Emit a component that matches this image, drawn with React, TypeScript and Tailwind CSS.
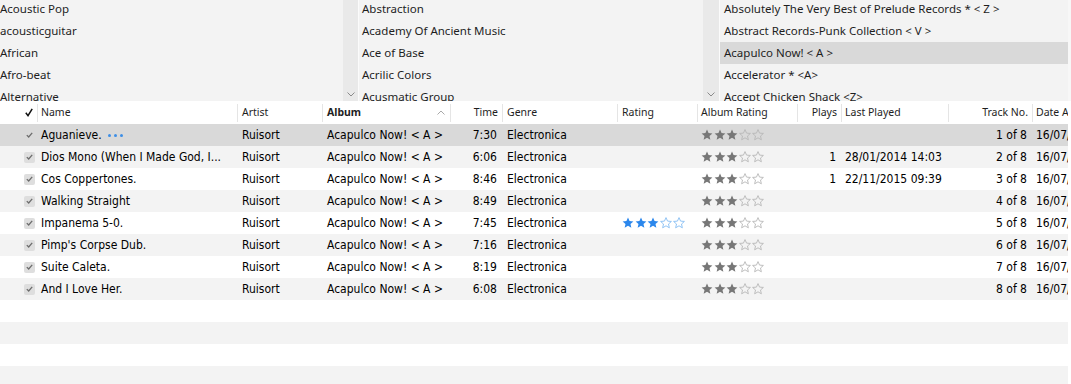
import React from "react";

const genres = ["Acoustic Pop", "acousticguitar", "African", "Afro-beat", "Alternative"];
const artists = ["Abstraction", "Academy Of Ancient Music", "Ace of Base", "Acrilic Colors", "Acusmatic Group"];
const albums = [
  "Absolutely The Very Best of Prelude Records * < Z >",
  "Abstract Records-Punk Collection < V >",
  "Acapulco Now! < A >",
  "Accelerator * <A>",
  "Accept Chicken Shack  <Z>",
];

type Track = {
  name: string;
  time: string;
  plays: string;
  last: string;
  track: string;
  rating: number;
};

const tracks: Track[] = [
  { name: "Aguanieve.", time: "7:30", plays: "", last: "", track: "1 of 8", rating: 0 },
  { name: "Dios Mono (When I Made God, I...", time: "6:06", plays: "1", last: "28/01/2014 14:03", track: "2 of 8", rating: 0 },
  { name: "Cos Coppertones.", time: "8:46", plays: "1", last: "22/11/2015 09:39", track: "3 of 8", rating: 0 },
  { name: "Walking Straight", time: "8:49", plays: "", last: "", track: "4 of 8", rating: 0 },
  { name: "Impanema 5-0.", time: "7:45", plays: "", last: "", track: "5 of 8", rating: 3 },
  { name: "Pimp's Corpse Dub.", time: "7:16", plays: "", last: "", track: "6 of 8", rating: 0 },
  { name: "Suite Caleta.", time: "8:19", plays: "", last: "", track: "7 of 8", rating: 0 },
  { name: "And I Love Her.", time: "6:08", plays: "", last: "", track: "8 of 8", rating: 0 },
];

const STAR = "M6 0.6 L7.55 4.1 L11.4 4.45 L8.5 7.0 L9.35 10.8 L6 8.8 L2.65 10.8 L3.5 7.0 L0.6 4.45 L4.45 4.1 Z";

function Stars({ filled, on, off }: { filled: number; on: string; off: string }) {
  return (
    <div className="flex items-center gap-[0.7px]">
      {[0, 1, 2, 3, 4].map((i) => (
        <svg key={i} width="12" height="12" viewBox="0 0 12 12">
          {i < filled ? (
            <path d={STAR} fill={on} />
          ) : (
            <path d={STAR} fill="none" stroke={off} strokeWidth="0.9" strokeLinejoin="round" />
          )}
        </svg>
      ))}
    </div>
  );
}

function Chevron({ up = false, color = "#8a8a8a" }: { up?: boolean; color?: string }) {
  return (
    <svg width="8" height="5" viewBox="0 0 8 5">
      <path d={up ? "M0.5 4.5 L4 1 L7.5 4.5" : "M0.5 0.5 L4 4 L7.5 0.5"} fill="none" stroke={color} strokeWidth="1" />
    </svg>
  );
}

function Check({ color }: { color: string }) {
  return (
    <svg width="7" height="6" viewBox="0 0 7 6">
      <path d="M0.8 3.1 L2.7 5 L6.2 0.9" fill="none" stroke={color} strokeWidth="1.3" />
    </svg>
  );
}

function BrowserRow({ text, selected, pad }: { text: string; selected?: boolean; pad: string }) {
  return (
    <div className={`h-[22px] flex items-center whitespace-nowrap ${pad} ${selected ? "bg-[#d9d9d9]" : ""}`}>
      {text}
    </div>
  );
}

function ScrollTrack({ w }: { w: string }) {
  return (
    <div className={`${w} h-full bg-[#e9e9e9] flex flex-col justify-end items-center pb-[4px] shrink-0`}>
      <Chevron />
    </div>
  );
}

export default function App() {
  const rowFont = "font-['DejaVu_Sans_Condensed','DejaVu_Sans',sans-serif] font-stretch-condensed text-[12px] text-black";
  return (
    <div className="w-[1071px] h-[384px] overflow-hidden bg-white font-['Noto_Sans',sans-serif] text-[12px]">
      {/* Browser */}
      <div className="h-[101px] flex bg-[#f3f3f3] text-[#1e1e1e] text-[11.5px] overflow-hidden">
        <div className="w-[343px] shrink-0 overflow-hidden">
          <div className="mt-[-2px]">
            {genres.map((g) => (
              <BrowserRow key={g} text={g} pad="pl-0" />
            ))}
          </div>
        </div>
        <ScrollTrack w="w-[15px]" />
        <div className="w-px shrink-0 bg-[#fbfbfb]" />
        <div className="w-[344px] shrink-0 overflow-hidden">
          <div className="mt-[-2px]">
            {artists.map((g) => (
              <BrowserRow key={g} text={g} pad="pl-[3px]" />
            ))}
          </div>
        </div>
        <ScrollTrack w="w-[16px]" />
        <div className="w-px shrink-0 bg-[#fbfbfb]" />
        <div className="w-[348px] shrink-0 overflow-hidden">
          <div className="mt-[-2px]">
            {albums.map((g, i) => (
              <BrowserRow key={g} text={g} pad="pl-[4px]" selected={i === 2} />
            ))}
          </div>
        </div>
        <div className="flex-1 bg-[#f7f7f7]" />
      </div>

      {/* Header */}
      <div className="h-[23px] flex text-[#1e1e1e] text-[10.5px] bg-white">
        <div className="w-[37px] shrink-0 flex items-center justify-end pr-[4px]">
          <svg width="8" height="9" viewBox="0 0 8 9">
            <path d="M0.8 4.8 L3 7.6 L7.2 0.8" fill="none" stroke="#111" strokeWidth="1.5" />
          </svg>
        </div>
        <HeaderCell w="w-[200px]" pad="pl-[3px]">Name</HeaderCell>
        <HeaderCell w="w-[85px]">Artist</HeaderCell>
        <HeaderCell w="w-[128px]">
          <span className="font-bold">Album</span>
          <span className="ml-auto mr-[5px] flex items-center">
            <Chevron up color="#a9a9a9" />
          </span>
        </HeaderCell>
        <HeaderCell w="w-[52px]" right>Time</HeaderCell>
        <HeaderCell w="w-[115px]">Genre</HeaderCell>
        <HeaderCell w="w-[80px]">Rating</HeaderCell>
        <HeaderCell w="w-[100px]" pad="pl-[3px]">Album Rating</HeaderCell>
        <HeaderCell w="w-[44px]" right>Plays</HeaderCell>
        <HeaderCell w="w-[107px]" pad="pl-[3px]">Last Played</HeaderCell>
        <HeaderCell w="w-[84px]" right>Track No.</HeaderCell>
        <HeaderCell w="w-[36px]" pad="pl-[3px]">Date Added</HeaderCell>
        <div className="flex-1" />
      </div>

      {/* Rows */}
      <div className={rowFont}>
        {Array.from({ length: 12 }).map((_, i) => {
          const t = tracks[i];
          const bg = i === 0 ? "bg-[#d9d9d9]" : i % 2 === 1 ? "bg-[#f3f3f3]" : "bg-white";
          return (
            <div key={i} className="h-[22px] flex">
              <div className={`w-[1068px] shrink-0 flex ${bg}`}>
                {t && (
                  <>
                    <div className="w-[37px] shrink-0 flex items-center">
                      <div
                        className={`ml-[24px] w-[11px] h-[11px] rounded-[2px] flex items-center justify-center ${
                          i === 0 ? "bg-[#d9d9d9]" : "bg-[#dedede]"
                        }`}
                      >
                        <Check color="#6c6c6c" />
                      </div>
                    </div>
                    <Cell w="w-[200px]" pad="pl-[4px]">
                      <span>{t.name}</span>
                      {i === 0 && (
                        <span className="ml-[6px] flex items-center gap-[3px]">
                          <span className="w-[3px] h-[3px] rounded-full bg-[#3d8ee6]" />
                          <span className="w-[3px] h-[3px] rounded-full bg-[#3d8ee6]" />
                          <span className="w-[3px] h-[3px] rounded-full bg-[#3d8ee6]" />
                        </span>
                      )}
                    </Cell>
                    <Cell w="w-[85px]">Ruisort</Cell>
                    <Cell w="w-[128px]">Acapulco Now! &lt; A &gt;</Cell>
                    <Cell w="w-[52px]" right>{t.time}</Cell>
                    <Cell w="w-[115px]">Electronica</Cell>
                    <Cell w="w-[80px]" pad="pl-[5px]">
                      {t.rating > 0 && <Stars filled={t.rating} on="#2b87ec" off="#86bdf3" />}
                    </Cell>
                    <Cell w="w-[100px]" pad="pl-[4px]">
                      <Stars filled={3} on="#777777" off="#b8b8b8" />
                    </Cell>
                    <Cell w="w-[44px]" right>{t.plays}</Cell>
                    <Cell w="w-[107px]" pad="pl-[4px]">{t.last}</Cell>
                    <Cell w="w-[84px]" right>{t.track}</Cell>
                    <Cell w="w-[36px]" pad="pl-[4px]">16/07/2016 10:22</Cell>
                  </>
                )}
              </div>
              <div className="flex-1 bg-white" />
            </div>
          );
        })}
      </div>
    </div>
  );
}

function HeaderCell({
  w,
  children,
  right,
  pad = "pl-[4px]",
}: {
  w: string;
  children: React.ReactNode;
  right?: boolean;
  pad?: string;
}) {
  return (
    <div className={`${w} shrink-0 flex items-center overflow-hidden whitespace-nowrap`}>
      <div className="w-px h-[18px] bg-[#e5e5e5] shrink-0" />
      <div className={`flex-1 min-w-0 flex items-center overflow-hidden ${right ? "justify-end pr-[4px]" : pad}`}>
        {children}
      </div>
    </div>
  );
}

function Cell({
  w,
  children,
  right,
  pad = "pl-[5px]",
}: {
  w: string;
  children?: React.ReactNode;
  right?: boolean;
  pad?: string;
}) {
  return (
    <div
      className={`${w} shrink-0 flex items-center overflow-hidden whitespace-nowrap ${
        right ? "justify-end pr-[5px]" : pad
      }`}
    >
      {children}
    </div>
  );
}
